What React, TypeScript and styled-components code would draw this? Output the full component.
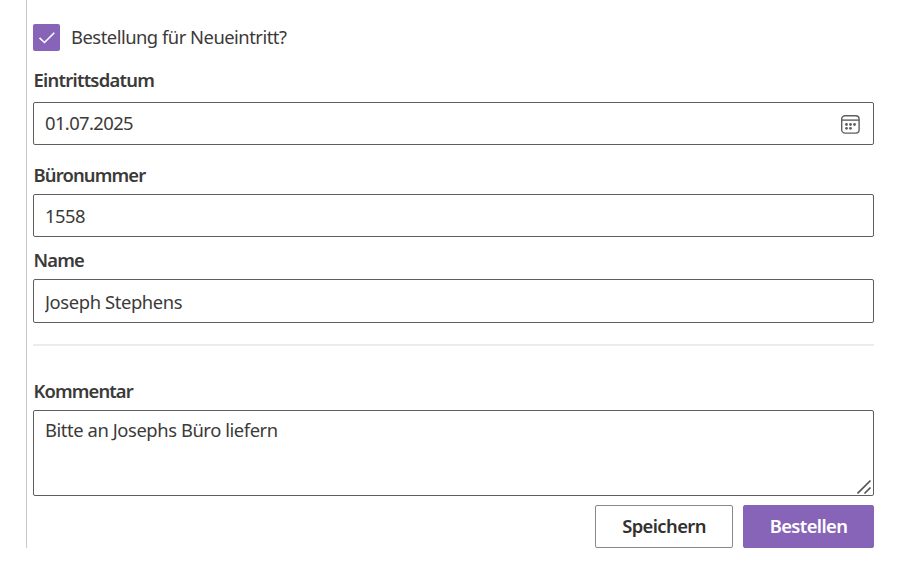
import React from "react";
import styled, { createGlobalStyle } from "styled-components";

const GlobalStyle = createGlobalStyle`
  * { box-sizing: border-box; }
  body { margin: 0; background: #fff; color: #3b3a39; font-family: "Noto Sans", "Open Sans", sans-serif; font-size: 18.4px; }
  input, textarea, button { font: inherit; color: inherit; margin: 0; outline: none; }
`;

const Panel = styled.form`
  display: flex;
  flex-direction: column;
  width: 848px;
  height: 548px;
  margin-left: 26px;
  padding: 24px 0 0 6px;
  border-left: 1px solid #c8c8c8;
`;

const CheckRow = styled.label`
  display: flex;
  align-items: center;
  gap: 11px;
  height: 27px;
  line-height: 25px;
  white-space: nowrap;
  letter-spacing: -0.5px;
`;

const CheckText = styled.span`
  height: 27px;
`;

const CheckBox = styled.span`
  display: flex;
  flex: none;
  width: 27px;
  height: 27px;
  border-radius: 2px;
  background: #8764b8;
`;

const Field = styled.div<{ $top: number }>`
  display: flex;
  flex-direction: column;
  margin-top: ${(p) => p.$top}px;
`;

const Label = styled.label<{ $gap: number; $track: number }>`
  height: 24px;
  margin: 0 0 ${(p) => p.$gap}px;
  padding-left: 0.5px;
  font-weight: 600;
  line-height: 24px;
  letter-spacing: ${(p) => p.$track}px;
`;

const InputFrame = styled.div<{ $height: number }>`
  display: flex;
  align-items: center;
  height: ${(p) => p.$height}px;
  padding: 0 12px 0 11px;
  border: 1px solid #605e5c;
  border-radius: 2px;
`;

const TextInput = styled.input<{ $track: number; $lift?: number }>`
  flex: 1;
  min-width: 0;
  height: 40px;
  padding: 1px 0 ${(p) => p.$lift ?? 0}px;
  border: 0;
  background: transparent;
  letter-spacing: ${(p) => p.$track}px;
`;

const Divider = styled.hr`
  flex: none;
  width: 100%;
  height: 2px;
  margin: 21px 0 0;
  border: 0;
  background: #edebe9;
`;

const CommentFrame = styled.div`
  display: flex;
  align-items: flex-end;
  height: 86px;
  padding: 0 0 0 11px;
  border: 1px solid #605e5c;
  border-radius: 2px;
`;

const Comment = styled.textarea`
  flex: 1;
  height: 84px;
  padding: 6px 0 0;
  border: 0;
  resize: none;
  background: transparent;
  line-height: 25px;
  letter-spacing: -0.43px;
`;

const Actions = styled.div`
  display: flex;
  justify-content: flex-end;
  gap: 10px;
  margin-top: 9px;
`;

const Button = styled.button<{ $primary?: boolean }>`
  width: ${(p) => (p.$primary ? 131 : 138)}px;
  height: 43px;
  padding: 0 0 2px;
  border: 1px solid ${(p) => (p.$primary ? "#8764b8" : "#8a8886")};
  border-radius: 2px;
  background: ${(p) => (p.$primary ? "#8764b8" : "#fff")};
  color: ${(p) => (p.$primary ? "#fff" : "#323130")};
  font-weight: 600;
  letter-spacing: -0.6px;
`;

const CheckIcon = () => (
  <svg width="27" height="27" viewBox="0 0 27 27" fill="none" stroke="#fff" strokeWidth="1.6">
    <path d="M6.5 13.8 11.5 18.5 21.3 8.8" />
  </svg>
);

const CalendarIcon = () => (
  <svg width="21" height="23" viewBox="0 -2 21 23" fill="none" stroke="#605e5c" strokeWidth="1.4">
    <rect x="1.7" y="1.7" width="17.4" height="17.4" rx="3.4" />
    <path d="M1.7 6.1h17.4" />
    <g fill="#605e5c" stroke="none">
      <circle cx="6.5" cy="10.5" r="1.4" />
      <circle cx="10.5" cy="10.5" r="1.4" />
      <circle cx="14.5" cy="10.5" r="1.4" />
      <circle cx="6.5" cy="14.3" r="1.4" />
      <circle cx="10.5" cy="14.3" r="1.4" />
    </g>
  </svg>
);

const ResizeGrip = () => (
  <svg width="16" height="16" viewBox="0 0 16 16" stroke="#505050" strokeWidth="1.6">
    <path d="M0.5 14.5 13.5 1.5M7.5 14.5 13.5 8.5" />
  </svg>
);

export default function App() {
  return (
    <>
      <GlobalStyle />
      <Panel>
        <CheckRow>
          <CheckBox role="checkbox" aria-checked="true"><CheckIcon /></CheckBox>
          <CheckText>Bestellung für Neueintritt?</CheckText>
        </CheckRow>
        <Field $top={17}>
          <Label htmlFor="date" $gap={10} $track={-0.74}>Eintrittsdatum</Label>
          <InputFrame $height={43}>
            <TextInput id="date" defaultValue="01.07.2025" $track={-0.6} $lift={3} />
            <CalendarIcon />
          </InputFrame>
        </Field>
        <Field $top={18}>
          <Label htmlFor="office" $gap={7} $track={-0.85}>Büronummer</Label>
          <InputFrame $height={43}>
            <TextInput id="office" defaultValue="1558" $track={-0.5} $lift={2} />
          </InputFrame>
        </Field>
        <Field $top={11}>
          <Label htmlFor="name" $gap={7} $track={-0.85}>Name</Label>
          <InputFrame $height={44}>
            <TextInput id="name" defaultValue="Joseph Stephens" $track={-0.4} />
          </InputFrame>
        </Field>
        <Divider />
        <Field $top={33}>
          <Label htmlFor="comment" $gap={7} $track={-0.88}>Kommentar</Label>
          <CommentFrame>
            <Comment id="comment" defaultValue="Bitte an Josephs Büro liefern" />
            <ResizeGrip />
          </CommentFrame>
        </Field>
        <Actions>
          <Button type="button">Speichern</Button>
          <Button type="button" $primary>Bestellen</Button>
        </Actions>
      </Panel>
    </>
  );
}
